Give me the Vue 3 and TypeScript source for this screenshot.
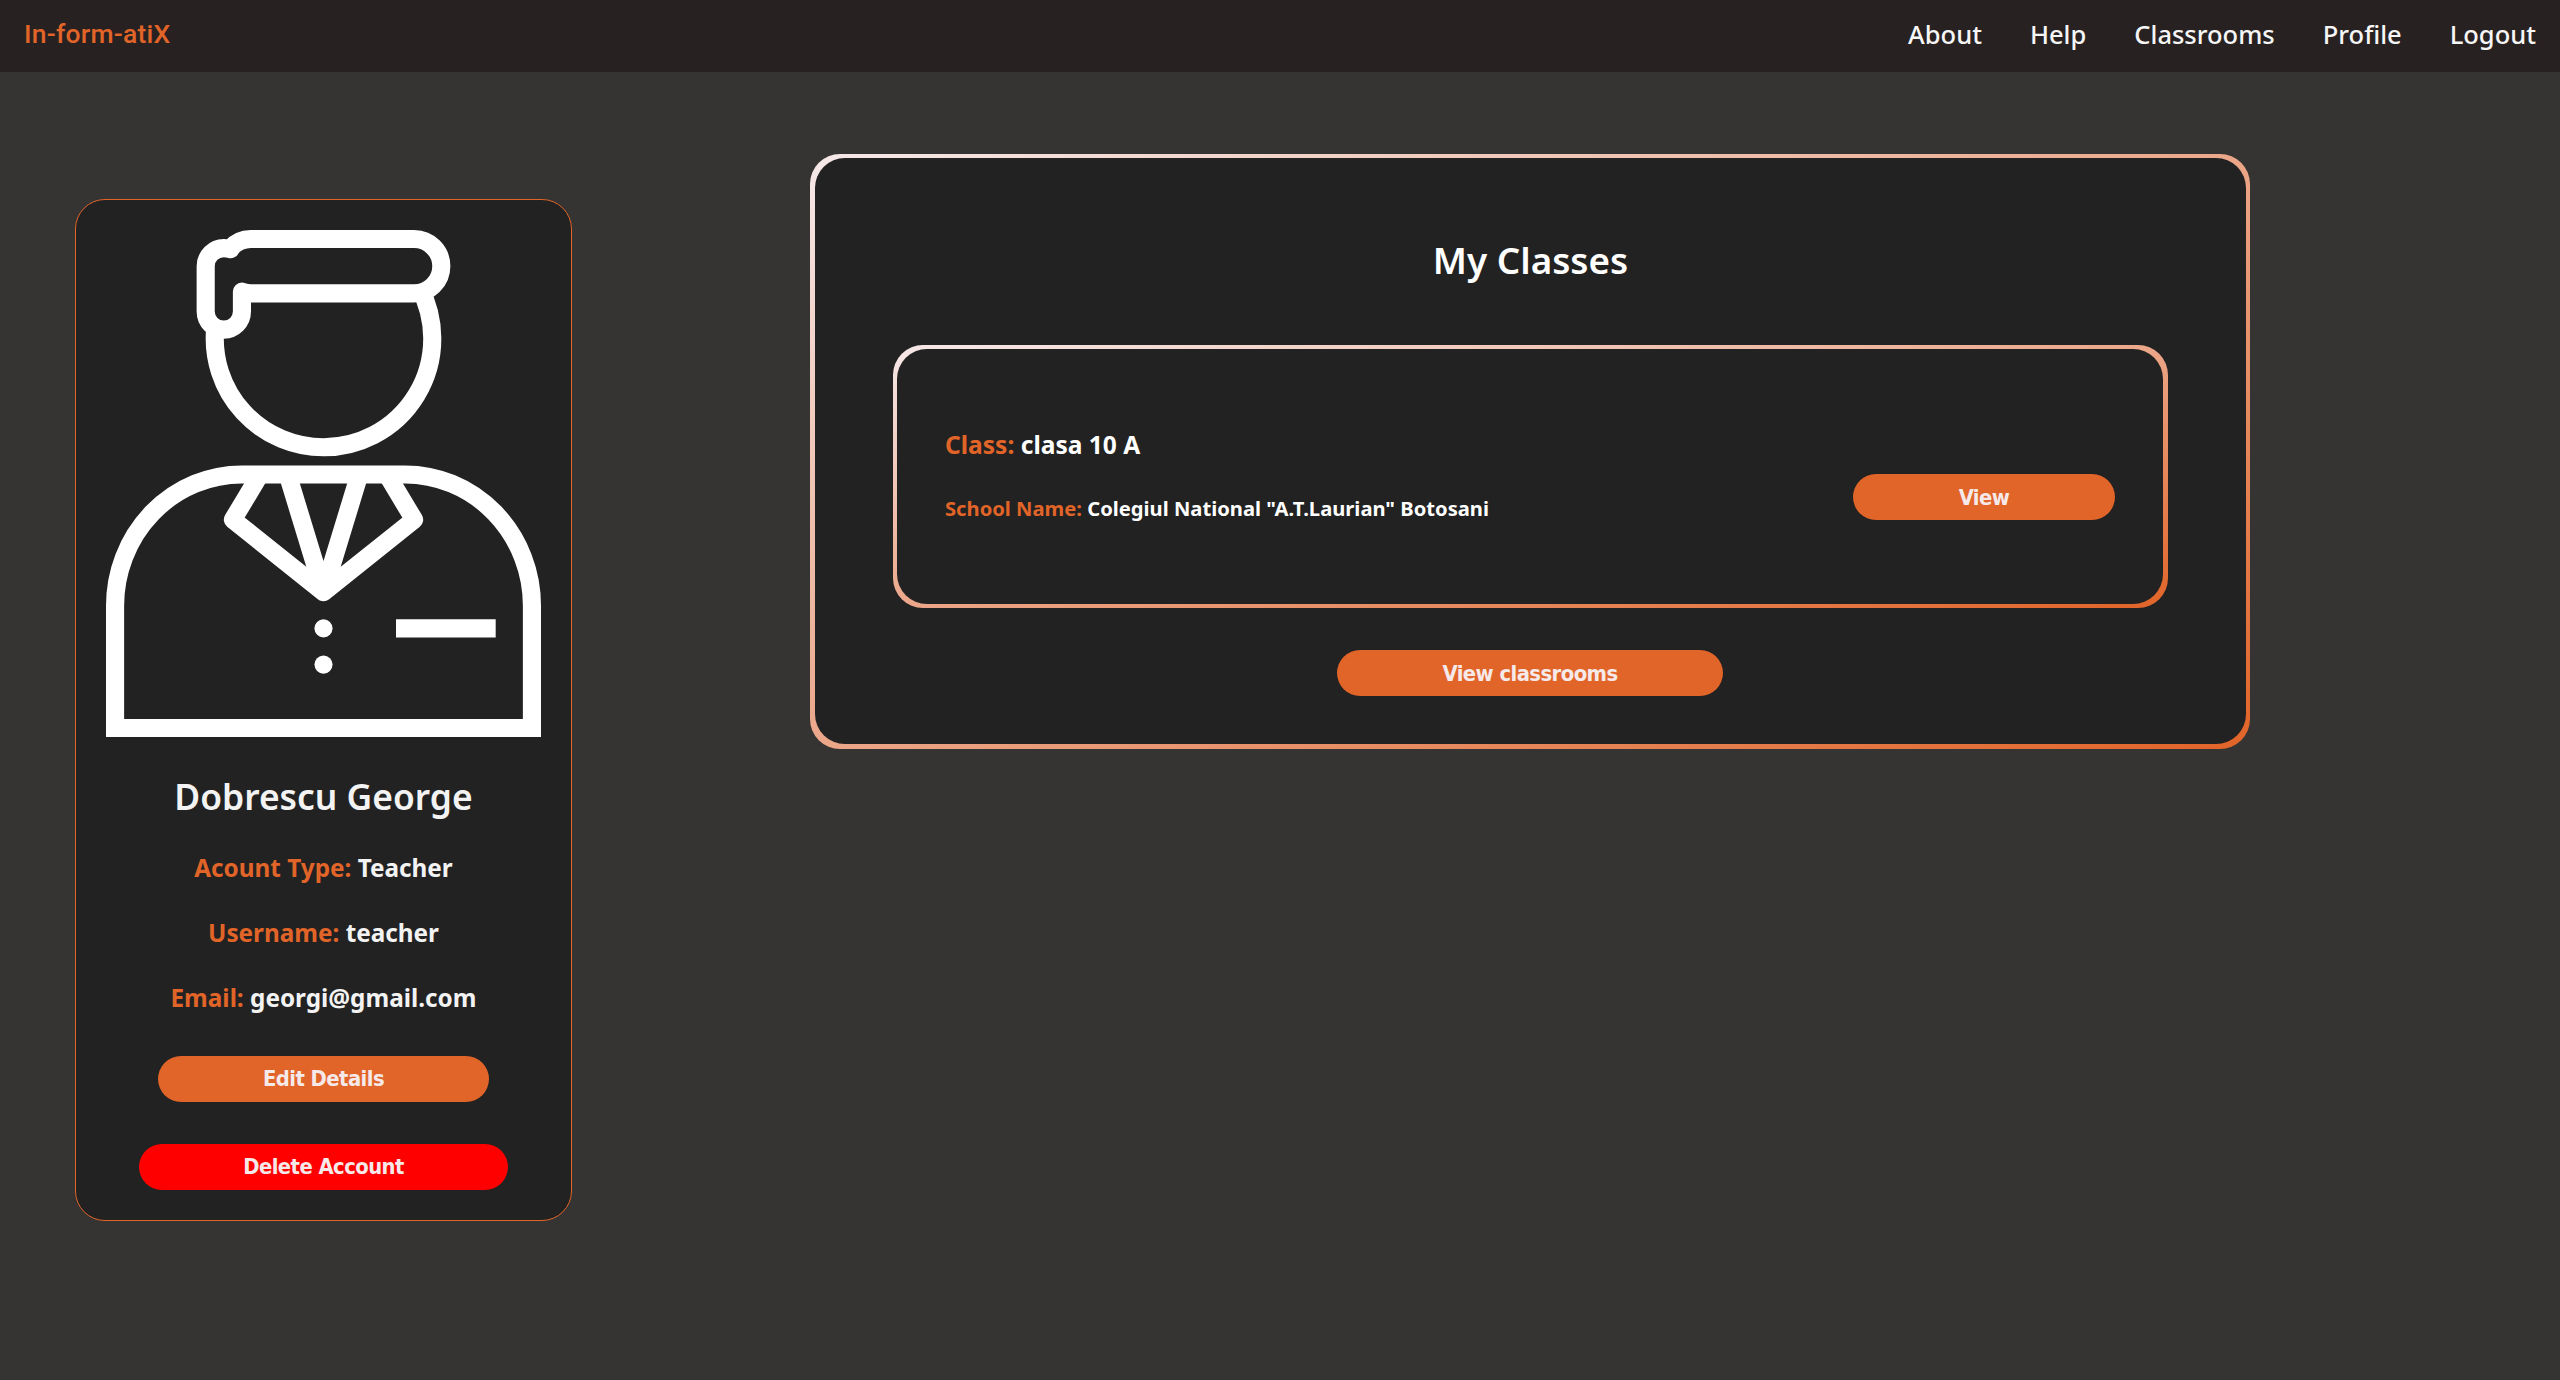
<script setup lang="ts">
interface Detail {
  label: string
  value: string
}

interface Classroom {
  name: string
  school: string
}

const links: string[] = ['About', 'Help', 'Classrooms', 'Profile', 'Logout']

const details: Detail[] = [
  { label: 'Acount Type:', value: 'Teacher' },
  { label: 'Username:', value: 'teacher' },
  { label: 'Email:', value: 'georgi@gmail.com' },
]

const classes: Classroom[] = [
  { name: 'clasa 10 A', school: 'Colegiul National "A.T.Laurian" Botosani' },
]
</script>

<template>
  <div class="page">
    <header class="navbar">
      <span class="brand">In-form-atiX</span>
      <nav class="links">
        <a v-for="link in links" :key="link" class="link">{{ link }}</a>
      </nav>
    </header>

    <main class="content">
      <section class="profile">
        <svg class="avatar" viewBox="0 0 24 28" preserveAspectRatio="none" fill="none" stroke="#fff" stroke-width="1">
          <!-- head -->
          <path d="M6.02 5.5A6 6 0 0 0 12 12A6 6 0 0 0 17.307 3.2" />
          <!-- hair -->
          <path
            stroke-linecap="round"
            stroke-linejoin="round"
            d="M6.87 1.06Q6.7 1 6.5 1a1 1 0 0 0-1 1V4.5a1 1 0 0 0 2 0V3.4Q7.75 3.5 8 3.5H17a1.5 1.5 0 0 0 0-3H8a1.5 1.5 0 0 0-1.13.51"
          />
          <!-- jacket -->
          <path d="M.5 27.5V20.75a7 7.25 0 0 1 7-7.25H16.5a7 7.25 0 0 1 7 7.25V27.5Z" />
          <!-- lapels and tie -->
          <path stroke-linejoin="round" d="M8.5 13.5L7 16L12 20L17 16L15.5 13.5M10.02 13.5L12 20L13.98 13.5" />
          <path d="M16 22H21.5" />
          <g fill="#fff" stroke="none">
            <circle cx="12" cy="22" r=".5" />
            <circle cx="12" cy="24" r=".5" />
          </g>
        </svg>
        <h1 class="name">Dobrescu George</h1>
        <p v-for="d in details" :key="d.label" class="detail">
          <span class="label">{{ d.label }}</span> {{ d.value }}
        </p>
        <button class="btn edit">Edit Details</button>
        <button class="btn delete">Delete Account</button>
      </section>

      <section class="panel">
        <div class="panel-body">
          <h2 class="title">My Classes</h2>
          <div v-for="c in classes" :key="c.name" class="class-card">
            <div class="class-body">
              <div>
                <p class="class-name"><span class="label">Class:</span> {{ c.name }}</p>
                <p class="school"><span class="label">School Name:</span> {{ c.school }}</p>
              </div>
              <button class="btn view">View</button>
            </div>
          </div>
          <button class="btn all">View classrooms</button>
        </div>
      </section>
    </main>
  </div>
</template>

<style>
body {
  margin: 0;
  background: #363432;
}
</style>

<style scoped>
.page {
  min-height: 1380px;
  background: #363432;
  color: #f3f3f3;
  font-family: "Noto Sans", sans-serif;
}

.navbar {
  box-sizing: border-box;
  height: 72px;
  padding: 0 24px 4px;
  display: flex;
  align-items: center;
  justify-content: space-between;
  background: #272121;
}

.brand {
  font: 500 26.5px/34px Roboto, sans-serif;
  letter-spacing: 0.23px;
  color: #e16428;
}

.links {
  display: flex;
  gap: 48px;
}

.link {
  font-size: 25.5px;
  font-weight: 500;
  line-height: 34px;
  color: #f6f6f6;
}

.content {
  display: flex;
  align-items: flex-start;
  gap: 238px;
  padding: 82px 0 0 75px;
}

.profile {
  box-sizing: border-box;
  width: 497px;
  margin-top: 45px;
  padding: 30px;
  display: flex;
  flex-direction: column;
  align-items: center;
  border: 1px solid #e16428;
  border-radius: 30px;
  background: #222;
}

.avatar {
  display: block;
  width: 435px;
  height: 507px;
}

.name {
  margin: 39px 0 35px;
  font-size: 35.4px;
  font-weight: 600;
  line-height: 40px;
}

.detail {
  margin: 0 0 31px;
  font-size: 24.3px;
  font-weight: 700;
  line-height: 34px;
}

.label {
  color: #e16428;
}

.btn {
  box-sizing: border-box;
  display: block;
  height: 46px;
  padding: 0;
  border: 0;
  border-radius: 25px;
  background: #e16428;
  color: #f6e9e9;
  font: 700 21.8px/44px "DejaVu Sans Condensed", "DejaVu Sans", sans-serif;
  letter-spacing: -0.55px;
}

.edit {
  width: 331px;
  margin-top: 10px;
}

.delete {
  width: 369px;
  margin-top: 42px;
  background: #f00;
}

.panel {
  box-sizing: border-box;
  width: 1440px;
  padding: 4px 4px 5px 5px;
  border-radius: 30px;
  background: linear-gradient(to bottom right, #f6e9e9, #e16428);
  color: #fff;
}

.panel-body {
  box-sizing: border-box;
  height: 586px;
  padding: 77px 78px 48px;
  display: flex;
  flex-direction: column;
  align-items: center;
  border-radius: 30px;
  background: #222;
}

.title {
  margin: 0 0 60px;
  font-size: 36.8px;
  font-weight: 600;
  line-height: 50px;
}

.class-card {
  box-sizing: border-box;
  width: 100%;
  padding: 4px 5px 4px 4px;
  border-radius: 30px;
  background: linear-gradient(to bottom right, #f6e9e9, #e16428);
}

.class-body {
  box-sizing: border-box;
  height: 255px;
  padding: 79px 48px 0;
  display: flex;
  align-items: flex-start;
  justify-content: space-between;
  border-radius: 30px;
  background: #222;
}

.class-name {
  margin: 0 0 32px;
  font-size: 24.55px;
  font-weight: 700;
  line-height: 34px;
}

.school {
  margin: 0;
  font-size: 20.18px;
  font-weight: 700;
  line-height: 28px;
}

.view {
  width: 262px;
  margin-top: 46px;
  padding-top: 2px;
}

.all {
  width: 386px;
  margin: 42px 1px 0 0;
  padding-top: 2px;
}
</style>
